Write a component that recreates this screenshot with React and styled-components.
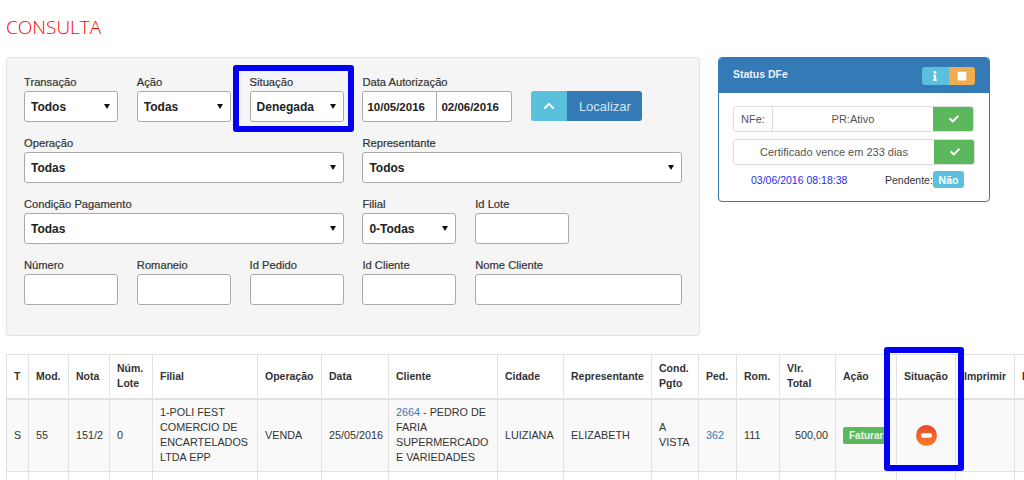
import React from 'react';
import styled, { createGlobalStyle } from 'styled-components';
import { FaCheck, FaChevronUp, FaInfo, FaStop } from 'react-icons/fa';

const GlobalStyle = createGlobalStyle`
    html, body {
        margin: 0;
        height: 480px;
        overflow: hidden;
        background: #fff;
        font-family: "Liberation Sans", Arial, sans-serif;
        font-size: 11px;
        color: #333;
    }
    * { box-sizing: border-box; }
`

const Page = styled.div`
    position: relative;
    width: 1024px;
    height: 480px;
    overflow: hidden;
    padding: 15px 0 0 6px;
`
const Title = styled.h1`
    margin: 0;
    height: 42px;
    font-family: "Open Sans", sans-serif;
    font-weight: 300;
    font-size: 19px;
    line-height: 24px;
    color: #ff0000;
`
const TopRow = styled.div`
    display: flex;
    align-items: flex-start;
    gap: 18px;
`
const Panel = styled.div`
    width: 694px;
    height: 279px;
    padding: 17px 17px 0 17px;
    background: #f5f5f5;
    border: 1px solid #e3e3e3;
    border-radius: 3px;
    display: grid;
    grid-template-columns: repeat(6, 94px);
    column-gap: 18.8px;
    grid-auto-rows: 61px;
`
const Field = styled.div`
    grid-column: span ${p => p.$span || 1};
    display: flex;
    flex-direction: column;
`
const Label = styled.label`
    height: 16px;
    line-height: 14px;
    font-size: 11.2px;
    color: #333;
    -webkit-text-stroke: 0.2px #333;
`
const SelectBox = styled.div`
    position: relative;
    height: 31px;
    &::after {
        content: "";
        position: absolute;
        right: 8px;
        top: 13px;
        border-left: 3px solid transparent;
        border-right: 3px solid transparent;
        border-top: 5px solid #111;
        pointer-events: none;
    }
`
const Select = styled.select`
    width: 100%;
    height: 31px;
    padding: 0 6px;
    appearance: none;
    font-family: "Liberation Sans", Arial, sans-serif;
    font-size: 12px;
    font-weight: bold;
    color: #222;
    background: #fff;
    border: 1px solid #aaa;
    border-radius: 3px;
`
const Input = styled.input`
    width: 100%;
    height: 31px;
    padding: 0 4px;
    font-family: "Liberation Sans", Arial, sans-serif;
    font-size: 11.5px;
    font-weight: bold;
    color: #222;
    background: #fff;
    border: 1px solid #aaa;
    border-radius: 3px;
`
const DateRow = styled.div`
    display: flex;
    align-items: flex-start;
`
const DateInput = styled(Input)`
    width: 75px;
    border-radius: ${p => (p.$first ? '3px 0 0 3px' : '0 3px 3px 0')};
    border-left-width: ${p => (p.$first ? '1px' : '0')};
`
const SearchButton = styled.div`
    display: flex;
    width: 111px;
    height: 30px;
    margin-left: 19px;
    border-radius: 3px;
    overflow: hidden;
    color: #fff;
`
const ButtonIcon = styled.span`
    width: 36px;
    display: flex;
    align-items: center;
    justify-content: center;
    background: #5bc0de;
    font-size: 12px;
`
const ButtonText = styled.span`
    flex: 1;
    display: flex;
    align-items: center;
    justify-content: center;
    background: #337ab7;
    font-size: 13px;
    color: #d5e4f0;
`
const StatusCard = styled.div`
    width: 272px;
    height: 145px;
    background: #fff;
    border: 1px solid #337ab7;
    border-radius: 4px;
    overflow: hidden;
`
const StatusHeader = styled.div`
    height: 35px;
    padding: 9px 14px 0 14px;
    background: #337ab7;
    display: flex;
    justify-content: space-between;
    color: #fff;
`
const StatusTitle = styled.span`
    font-size: 10.5px;
    font-weight: bold;
    line-height: 14px;
    color: #eef4f9;
`
const HeaderButtons = styled.div`
    display: flex;
    height: 18px;
    border-radius: 3px;
    overflow: hidden;
`
const HeaderButton = styled.span`
    width: 26.5px;
    display: flex;
    align-items: center;
    justify-content: center;
    background: ${p => p.$bg};
    font-size: 10px;
`
const StatusBody = styled.div`
    padding: 13px 14px 0 14px;
    display: flex;
    flex-direction: column;
    gap: 7px;
`
const Group = styled.div`
    display: flex;
    height: 26px;
    width: ${p => p.$w}px;
    border: 1px solid #ddd;
    border-radius: 3px;
    font-size: 11px;
    color: #555;
    overflow: hidden;
`
const Addon = styled.span`
    width: 39px;
    flex: none;
    display: flex;
    align-items: center;
    justify-content: center;
    border-right: 1px solid #ddd;
`
const GroupText = styled.span`
    flex: 1;
    display: flex;
    align-items: center;
    justify-content: center;
`
const GreenButton = styled.span`
    width: 41px;
    flex: none;
    margin: -1px -1px -1px 0;
    display: flex;
    align-items: center;
    justify-content: center;
    background: #5cb85c;
    color: #fff;
    font-size: 10px;
`
const StatusFoot = styled.div`
    display: flex;
    align-items: center;
    height: 17px;
    margin-top: -1px;
    padding-left: 18px;
    font-size: 10.5px;
`
const Stamp = styled.span`
    width: 134px;
    color: #2a2aee;
`
const Pending = styled.span`
    width: 48px;
    color: #333;
`
const Badge = styled.span`
    width: 31px;
    height: 17px;
    display: flex;
    align-items: center;
    justify-content: center;
    background: #5bc0de;
    border-radius: 3px;
    color: #fff;
    font-weight: bold;
`
const TableWrap = styled.div`
    margin-top: 18px;
    width: 1100px;
`
const Table = styled.table`
    width: 1100px;
    table-layout: fixed;
    border-collapse: collapse;
    font-size: 10.8px;
    line-height: 15px;
`
const Th = styled.th`
    height: 44px;
    padding: 0 7px;
    text-align: ${p => p.$align || 'left'};
    vertical-align: middle;
    font-size: 10.5px;
    font-weight: bold;
    color: #333;
    white-space: ${p => (p.$nowrap ? 'nowrap' : 'normal')};
    border: 1px solid #e2e2e2;
    border-bottom-width: 2px;
`
const Td = styled.td`
    height: 73px;
    padding: 0 7px;
    text-align: ${p => p.$align || 'left'};
    vertical-align: middle;
    color: #333;
    background: #f9f9f9;
    border: 1px solid #e2e2e2;
    ${p => p.$empty && 'background: #fff; height: 40px;'}
`
const Link = styled.a`
    color: #337ab7;
`
const ActionLabel = styled.span`
    display: inline-block;
    padding: 3px 6px;
    background: #5cb85c;
    border-radius: 2px;
    color: #eef8ee;
    font-size: 10px;
    font-weight: bold;
    line-height: 11px;
`
const Highlight = styled.div`
    position: absolute;
    left: ${p => p.$x}px;
    top: ${p => p.$y}px;
    width: ${p => p.$w}px;
    height: ${p => p.$h}px;
    border: 6px solid #0000f2;
    border-radius: 3px;
    pointer-events: none;
`

const SelectField = ({ label, value, span }) => (
    <Field $span={span}>
        <Label>{label}</Label>
        <SelectBox>
            <Select defaultValue={value}><option>{value}</option></Select>
        </SelectBox>
    </Field>
)

const InputField = ({ label, span }) => (
    <Field $span={span}>
        <Label>{label}</Label>
        <Input />
    </Field>
)

const MinusIcon = () => (
    <svg width="21" height="21" viewBox="0 0 21 21" style={{ verticalAlign: 'middle' }}>
        <defs>
            <linearGradient id="stopFill" x1="0" y1="0" x2="0" y2="1">
                <stop offset="0" stopColor="#e8482c" />
                <stop offset="1" stopColor="#fb7d2d" />
            </linearGradient>
        </defs>
        <circle cx="10.5" cy="10.5" r="10.5" fill="url(#stopFill)" />
        <rect x="5" y="8.2" width="11" height="4.6" rx="1.8" fill="#fff" />
    </svg>
)

const columns = [
    { name: 'T', w: 22 },
    { name: 'Mod.', w: 40 },
    { name: 'Nota', w: 41 },
    { name: 'Núm. Lote', w: 43 },
    { name: 'Filial', w: 105 },
    { name: 'Operação', w: 64 },
    { name: 'Data', w: 67 },
    { name: 'Cliente', w: 109 },
    { name: 'Cidade', w: 66 },
    { name: 'Representante', w: 88 },
    { name: 'Cond. Pgto', w: 47 },
    { name: 'Ped.', w: 38 },
    { name: 'Rom.', w: 43 },
    { name: 'Vlr. Total', w: 56 },
    { name: 'Ação', w: 61 },
    { name: 'Situação', w: 59, align: 'center' },
    { name: 'Imprimir', w: 59, align: 'center', nowrap: true },
    { name: 'Link', w: 92 },
]

export default function App() {
    return (
        <Page>
            <GlobalStyle />
            <Title>CONSULTA</Title>
            <TopRow>
                <Panel>
                    <SelectField label="Transação" value="Todos" />
                    <SelectField label="Ação" value="Todas" />
                    <SelectField label="Situação" value="Denegada" />
                    <Field $span={3}>
                        <Label>Data Autorização</Label>
                        <DateRow>
                            <DateInput $first defaultValue="10/05/2016" />
                            <DateInput defaultValue="02/06/2016" />
                            <SearchButton>
                                <ButtonIcon><FaChevronUp /></ButtonIcon>
                                <ButtonText>Localizar</ButtonText>
                            </SearchButton>
                        </DateRow>
                    </Field>
                    <SelectField label="Operação" value="Todas" span={3} />
                    <SelectField label="Representante" value="Todos" span={3} />
                    <SelectField label="Condição Pagamento" value="Todas" span={3} />
                    <SelectField label="Filial" value="0-Todas" />
                    <InputField label="Id Lote" />
                    <span />
                    <InputField label="Número" />
                    <InputField label="Romaneio" />
                    <InputField label="Id Pedido" />
                    <InputField label="Id Cliente" />
                    <InputField label="Nome Cliente" span={2} />
                </Panel>
                <StatusCard>
                    <StatusHeader>
                        <StatusTitle>Status DFe</StatusTitle>
                        <HeaderButtons>
                            <HeaderButton $bg="#5bc0de"><FaInfo /></HeaderButton>
                            <HeaderButton $bg="#f0ad4e"><FaStop /></HeaderButton>
                        </HeaderButtons>
                    </StatusHeader>
                    <StatusBody>
                        <Group $w={241}>
                            <Addon>NFe:</Addon>
                            <GroupText>PR:Ativo</GroupText>
                            <GreenButton><FaCheck /></GreenButton>
                        </Group>
                        <Group $w={242}>
                            <GroupText>Certificado vence em 233 dias</GroupText>
                            <GreenButton><FaCheck /></GreenButton>
                        </Group>
                        <StatusFoot>
                            <Stamp>03/06/2016 08:18:38</Stamp>
                            <Pending>Pendente:</Pending>
                            <Badge>Não</Badge>
                        </StatusFoot>
                    </StatusBody>
                </StatusCard>
            </TopRow>
            <TableWrap>
                <Table>
                    <colgroup>
                        {columns.map(c => <col key={c.name} width={c.w} />)}
                    </colgroup>
                    <thead>
                        <tr>
                            {columns.map(c => (
                                <Th key={c.name} $align={c.align} $nowrap={c.nowrap}>{c.name}</Th>
                            ))}
                        </tr>
                    </thead>
                    <tbody>
                        <tr>
                            <Td>S</Td>
                            <Td>55</Td>
                            <Td>151/2</Td>
                            <Td>0</Td>
                            <Td>1-POLI FEST COMERCIO DE ENCARTELADOS LTDA EPP</Td>
                            <Td>VENDA</Td>
                            <Td>25/05/2016</Td>
                            <Td><Link>2664</Link> - PEDRO DE FARIA SUPERMERCADO E VARIEDADES</Td>
                            <Td>LUIZIANA</Td>
                            <Td>ELIZABETH</Td>
                            <Td>A VISTA</Td>
                            <Td><Link>362</Link></Td>
                            <Td>111</Td>
                            <Td $align="right">500,00</Td>
                            <Td><ActionLabel>Faturar</ActionLabel></Td>
                            <Td $align="center"><MinusIcon /></Td>
                            <Td />
                            <Td />
                        </tr>
                        <tr>
                            {columns.map(c => <Td key={c.name} $empty />)}
                        </tr>
                    </tbody>
                </Table>
            </TableWrap>
            <Highlight $x={233} $y={65} $w={121} $h={67} />
            <Highlight $x={883.5} $y={347} $w={80.5} $h={124} />
        </Page>
    )
}
